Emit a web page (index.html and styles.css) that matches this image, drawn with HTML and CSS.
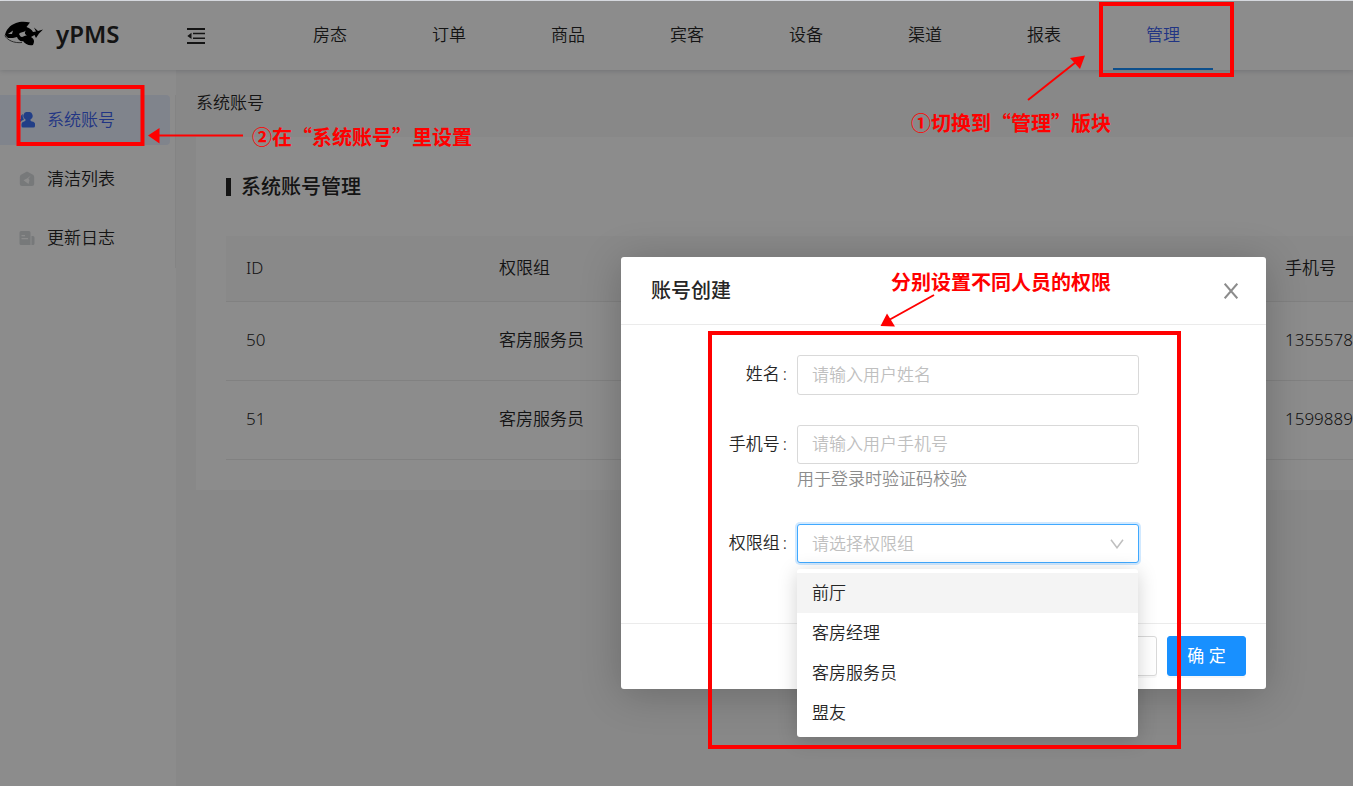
FILE: index.html
```html
<!DOCTYPE html>
<html lang="zh-CN">
<head>
<meta charset="utf-8">
<meta name="viewport" content="width=device-width, initial-scale=1">
<title>yPMS</title>
<link rel="stylesheet" href="styles.css">
</head>
<body>
<div class="app">
  <header class="topbar">
    <div class="brand">
      <svg class="brand-logo" viewBox="0 0 40 26" aria-hidden="true">
        <path d="M1 14C2 9 6 4 12 2C16 .5 21 .5 26 1.500L22.500 6C26 7 28 9 29 11L32 10.500L30 6.500L34 10L39 8.500L35 12.500L32 17L30.500 14L27 16C30 18 31 20 29 24C25 25 21 23 19 20C17 21 14 19 13 16L9 17L4 17Z"/>
        <path class="logo-cut" d="M15 13C17 10.500 19 12 22 9.500C20 12 21 13 23 14.500C20 14 19 17 16.500 15.500ZM4 13L9 9.500L8 13Z"/>
        <path class="logo-line" d="M.8 14.500C3 19 10 22.500 18 21.500"/>
      </svg>
      <span class="brand-name">yPMS</span>
    </div>
    <button class="fold" type="button" aria-label="收起菜单">
      <svg viewBox="0 0 18 16" aria-hidden="true"><path d="M0 0H18V2H0ZM6 4.700H18V6.300H6ZM6 9.500H18V11.100H6ZM0 14H18V16H0ZM4.500 4.700V11.100L.3 7.900Z"/></svg>
    </button>
    <nav class="nav">
      <a href="#">房态</a>
      <a href="#">订单</a>
      <a href="#">商品</a>
      <a href="#">宾客</a>
      <a href="#">设备</a>
      <a href="#">渠道</a>
      <a href="#">报表</a>
      <a href="#" class="current">管理</a>
    </nav>
  </header>
  <div class="columns">
    <aside class="sidebar">
      <nav class="menu">
        <a href="#" class="menu-item selected">
          <svg viewBox="0 0 16 16" aria-hidden="true"><path d="M9 0A4 4 0 0 1 11.500 7.500Q11 9 13 9.500Q16 10 16 12V14Q16 15.500 14.500 15.500H4Q2.500 15.500 2.500 14V12Q2.500 10 5 9.500Q7 9 6.500 7.500A4 4 0 0 1 9 0ZM4 2Q3 5 5 7.500Q2 8.500 1.500 10H0V8Q1 7 2 6.500Q1 3.500 4 2Z"/></svg>
          <span>系统账号</span>
        </a>
        <a href="#" class="menu-item">
          <svg viewBox="0 0 16 16" aria-hidden="true"><path d="M8 .5L14 3.700Q15.200 4.500 15.200 6V13Q15.200 15 13 15H3Q.8 15 .8 13V6Q.8 4.500 2 3.700Z"/><path class="icon-cut" d="M12 4.500L9.300 7.800L10.500 9L9.500 13L4.500 9.200L8 7.500Z"/></svg>
          <span>清洁列表</span>
        </a>
        <a href="#" class="menu-item">
          <svg viewBox="0 0 16 16" aria-hidden="true"><path d="M2 1H10Q11.500 1 11.500 2.500V15H2Q.5 15 .5 13.500V2.500Q.5 1 2 1ZM12.500 6H14Q15.500 6 15.500 7.500V13.500Q15.500 15 14 15H12.500Z"/><path class="icon-cut" d="M2.500 5H6V6.200H2.500ZM2.500 8H9V9.200H2.500Z"/></svg>
          <span>更新日志</span>
        </a>
      </nav>
    </aside>
    <main class="content">
      <div class="crumb">系统账号</div>
      <section class="card">
        <h1 class="card-title">系统账号管理</h1>
        <table class="accounts">
          <colgroup><col class="col-id"><col class="col-group"><col></colgroup>
          <thead><tr><th scope="col">ID</th><th scope="col">权限组</th><th scope="col">手机号</th></tr></thead>
          <tbody>
            <tr><td>50</td><td>客房服务员</td><td>1355578</td></tr>
            <tr><td>51</td><td>客房服务员</td><td>1599889</td></tr>
          </tbody>
        </table>
      </section>
    </main>
  </div>
</div>

<div class="mask"></div>

<div class="modal" role="dialog" aria-labelledby="modal-title">
  <div class="modal-head">
    <h2 id="modal-title">账号创建</h2>
    <button class="close" type="button" aria-label="关闭">
      <svg viewBox="0 0 14 16" aria-hidden="true"><path d="M.7 .7L13.300 15.300M13.300 .7L.7 15.300"/></svg>
    </button>
  </div>
  <form class="form">
    <div class="field">
      <label for="name">姓名<i>:</i></label>
      <input id="name" type="text" placeholder="请输入用户姓名">
    </div>
    <div class="field">
      <label for="phone">手机号<i>:</i></label>
      <div>
        <input id="phone" type="text" placeholder="请输入用户手机号">
        <p class="hint">用于登录时验证码校验</p>
      </div>
    </div>
    <div class="field">
      <label for="group">权限组<i>:</i></label>
      <div class="picker">
        <select id="group"><option>请选择权限组</option></select>
        <svg class="chevron" viewBox="0 0 14 10" aria-hidden="true"><path d="M1 .7L7 8.800L13 .7"/></svg>
        <ul class="dropdown" role="listbox" aria-label="权限组">
          <li class="active" role="option">前厅</li>
          <li role="option">客房经理</li>
          <li role="option">客房服务员</li>
          <li role="option">盟友</li>
        </ul>
      </div>
    </div>
  </form>
  <div class="modal-foot">
    <button class="btn" type="button">取 消</button>
    <button class="btn primary" type="button">确 定</button>
  </div>
</div>

<div class="notes">
  <svg class="marks" width="1353" height="786" viewBox="0 0 1353 786" aria-hidden="true">
    <g class="boxes">
      <rect x="1101" y="4" width="131" height="71"/>
      <rect x="18.500" y="87" width="124" height="57"/>
      <rect x="710" y="333" width="469" height="414"/>
    </g>
    <path class="shaft" d="M1028 100L1076 62M243 135.500H158M934 295L889 320"/>
    <path class="head" d="M1085 55.500L1070 58L1080 69ZM148 135.500L159.500 128V143.500ZM880.500 326L887 313.500L895 326.500Z"/>
  </svg>
  <p class="note note-tab">①切换到“管理”版块</p>
  <p class="note note-menu">②在“系统账号”里设置</p>
  <p class="note note-form">分别设置不同人员的权限</p>
</div>
</body>
</html>
```

FILE: styles.css
```css
* { box-sizing: border-box; }

body {
  margin: 0;
  height: 100vh;
  position: relative;
  overflow: hidden;
  font-family: "Noto Sans", "Noto Sans CJK SC", sans-serif;
  font-size: 17px;
  font-weight: 350;
  line-height: 24px;
  color: #262626;
}

h1, h2, p, ul { margin: 0; padding: 0; }
a { color: inherit; text-decoration: none; }
button, input, select { font: inherit; color: inherit; }
svg { display: block; fill: currentColor; }

.app {
  min-height: 100vh;
  display: flex;
  flex-direction: column;
  background: #f7f7f7;
  border-top: 1px solid #dfe2e6;
}

/* Top bar */
.topbar {
  height: 69px;
  display: flex;
  align-items: center;
  background: #fff;
  box-shadow: 0 1px 5px rgba(0, 21, 41, .16);
  position: relative;
}
.brand {
  width: 187px;
  padding: 0 0 4px 4px;
  display: flex;
  align-items: center;
  gap: 12px;
}
.brand-logo { width: 40px; height: 26px; color: #000; }
.logo-cut { fill: #fff; }
.logo-line { fill: none; stroke: #555; stroke-width: 1; }
.brand-name { font-size: 24px; font-weight: 600; line-height: 32px; }
.fold {
  width: 18px;
  height: 16px;
  padding: 0;
  border: 0;
  background: none;
}
.nav {
  margin-left: 75px;
  height: 100%;
  display: flex;
  gap: 19px;
}
.nav a {
  width: 100px;
  display: flex;
  align-items: center;
  justify-content: center;
  border-bottom: 2px solid transparent;
}
.nav .current { color: #3d62f0; border-bottom-color: #1890ff; }

.columns { flex: 1; display: flex; }

/* Side menu */
.sidebar { width: 176px; padding-top: 25px; background: #fff; }
.menu {
  display: flex;
  flex-direction: column;
  gap: 9px;
  padding: 0 5px 5px 0;
  border-right: 1px solid #f0f0f0;
}
.menu-item {
  height: 50px;
  padding-left: 19px;
  display: flex;
  align-items: center;
  gap: 12px;
}
.menu-item svg { width: 16px; height: 16px; color: #d9dcdf; }
.menu-item .icon-cut { fill: #fff; }
.selected { color: #3d62f0; background: #eaf0ff; border-radius: 0 4px 4px 0; }
.menu .selected svg { color: #3d72f6; }

/* Content */
.content { flex: 1; min-width: 0; padding-left: 20px; }
.crumb { height: 67px; line-height: 66px; }
.card {
  padding: 30px 0 30px 30px;
  background: #fff;
  overflow: hidden;
}
.card-title {
  display: flex;
  align-items: center;
  gap: 10px;
  height: 40px;
  font-size: 20px;
  font-weight: 500;
}
.card-title::before { content: ""; width: 5px; height: 18px; background: #262626; }
.accounts {
  margin-top: 29px;
  width: 100%;
  table-layout: fixed;
  border-collapse: separate;
  border-spacing: 0;
  white-space: nowrap;
}
.col-id { width: 253px; }
.col-group { width: 786px; }
.accounts th, .accounts td {
  height: 79px;
  padding: 0 0 2px 20px;
  text-align: left;
  font-weight: 350;
  border-bottom: 1px solid #ebebeb;
}
.accounts th { height: 66px; background: #fafafa; }

.mask { position: absolute; inset: 1px 0 0; background: rgba(0, 0, 0, .45); }

/* Dialog */
.modal {
  position: absolute;
  left: 621px;
  top: 257px;
  width: 645px;
  background: #fff;
  border-radius: 3px;
  box-shadow: 0 5px 40px rgba(0, 0, 0, .22);
}
.modal-head {
  height: 68px;
  padding: 0 28px 0 30px;
  display: flex;
  align-items: center;
  justify-content: space-between;
  border-bottom: 1px solid #ebebeb;
}
.modal-head h2 { font-size: 20px; font-weight: 500; }
.close { width: 14px; height: 16px; padding: 0; border: 0; background: none; color: #8c8c8c; }
.close path { fill: none; stroke: currentColor; stroke-width: 2; }
.form { padding: 30px 127px 60px 0; display: grid; gap: 30px; }
.field { display: grid; grid-template-columns: 166px 1fr; column-gap: 10px; }
.field label { height: 38px; line-height: 38px; text-align: right; }
.field label i { font-style: normal; margin-left: 3px; }
.field input, .field select {
  display: block;
  width: 100%;
  height: 39px;
  padding: 0 14px;
  border: 1px solid #d9d9d9;
  border-radius: 3px;
  background: #fff;
  outline: 0;
}
.field #name { height: 40px; }
.field input { padding-bottom: 2px; }
.field input::placeholder { color: #bfbfbf; opacity: 1; }
.hint { height: 30px; line-height: 29px; color: #8c8c8c; }
.picker { position: relative; }
.field select {
  appearance: none;
  color: #bfbfbf;
  border-color: #40a9ff;
  box-shadow: 0 0 0 2px rgba(24, 144, 255, .2);
}
.chevron {
  position: absolute;
  right: 15px;
  top: 15px;
  width: 14px;
  height: 10px;
}
.chevron path { fill: none; stroke: #bfbfbf; stroke-width: 1.500; }
.dropdown {
  position: absolute;
  z-index: 2;
  left: 0;
  right: 1px;
  top: 45px;
  padding: 4px 0;
  list-style: none;
  background: #fff;
  border-radius: 3px;
  box-shadow: 0 3px 20px rgba(0, 0, 0, .18);
}
.dropdown li { height: 40px; line-height: 40px; padding-left: 15px; }
.dropdown .active { background: #f4f4f4; }
.modal-foot {
  padding: 12px 20px 13px;
  display: flex;
  justify-content: flex-end;
  gap: 10px;
  border-top: 1px solid #ebebeb;
}
.btn {
  width: 79px;
  height: 40px;
  padding: 0;
  border: 1px solid #d9d9d9;
  border-radius: 3px;
  background: #fff;
  box-shadow: 0 2px 0 rgba(0, 0, 0, .03);
}
.primary { color: #fff; background: #1890ff; border-color: #1890ff; font-weight: 400; }

/* Annotations drawn over the page */
.notes { position: absolute; inset: 0; color: #f00; pointer-events: none; z-index: 3; }
.boxes { fill: none; stroke: #f00; stroke-width: 4; }
.shaft { fill: none; stroke: #f00; stroke-width: 2; }
.note {
  position: absolute;
  font-family: "Noto Sans CJK SC", sans-serif;
  font-size: 20px;
  font-weight: 700;
  line-height: 28px;
  white-space: nowrap;
}
.note-tab { left: 911px; top: 109px; }
.note-menu { left: 252px; top: 123px; }
.note-form { left: 891px; top: 268px; }
```
